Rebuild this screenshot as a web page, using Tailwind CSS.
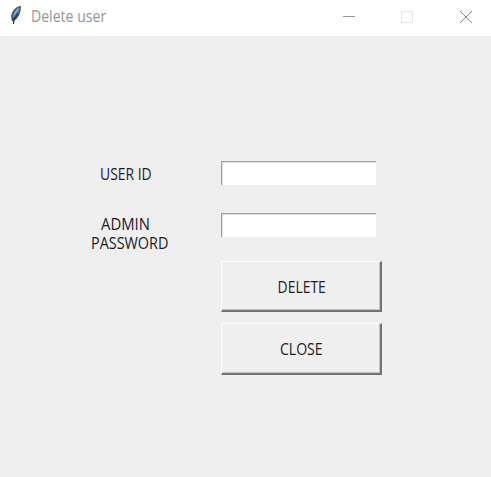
<!DOCTYPE html>
<html lang="en">
<head>
<meta charset="utf-8">
<title>Delete user</title>
<script src="https://cdn.jsdelivr.net/npm/@tailwindcss/browser@4"></script>
</head>
<body class="h-[477px] w-[491px] overflow-hidden bg-[#efefef] font-['Open_Sans','Noto_Sans',sans-serif] text-[#1c1c24]">
<header class="flex h-9 items-start bg-white">
  <svg class="ml-[9px] mt-[5px] h-5 w-[14px]" viewBox="0 0 14 20">
    <path d="M11.800.8C7 1.500 3 6 2.200 11L2.800 16.200L4.800 16C9.500 13 12.300 7 11.800.8Z" fill="#454b54"/>
    <path d="M10.500 2.200C7 3.500 4 7.500 3.500 12.500L6 12.800C9.500 10 10.800 6 10.500 2.200Z" fill="#4f8fd2"/>
    <path d="M9.300 3.500L5 9.500" stroke="#9dc0e4" stroke-width="1"/>
    <path d="M9 8L5 14L4.500 19" fill="none" stroke="#292d33" stroke-width="1.200"/>
  </svg>
  <h1 class="ml-2 mt-[5px] w-[300px] origin-left scale-x-[.88] text-[16px] leading-[22px] text-[#969696]">Delete user</h1>
  <svg class="ml-3 mt-[11px] h-3 w-3 shrink-0" viewBox="0 0 12 12" shape-rendering="crispEdges"><path d="M0 5.500H12" stroke="#999"/></svg>
  <svg class="ml-[46px] mt-[11px] h-3 w-3 shrink-0" viewBox="0 0 12 12" shape-rendering="crispEdges"><path d="M.5.5h11v11H.5z" fill="none" stroke="#e8e8e8"/></svg>
  <svg class="ml-[47px] mt-[11px] h-3 w-3 shrink-0" viewBox="0 0 12 12"><path d="M0 0L12 12M12 0L0 12" stroke="#888"/></svg>
</header>
<main class="pt-[125px]">
  <div class="flex h-[52px] items-start">
    <label for="uid" class="ml-[100px] mt-[4px] w-[121px] origin-left scale-x-[.87] text-[16px] leading-[18px]">USER ID</label>
    <input id="uid" class="h-6 w-[155px] border-t border-l border-[#a0a0a0] bg-white shadow-[inset_1px_1px_0_#dedede] outline-none">
  </div>
  <div class="flex h-12 items-start">
    <label for="pwd" class="ml-[91px] mt-[2px] w-[130px] text-[16px] leading-[19px]">
      <span class="ml-[10px] block origin-left scale-x-[.93]">ADMIN</span>
      <span class="block origin-left scale-x-[.9]">PASSWORD</span>
    </label>
    <input id="pwd" type="password" class="h-6 w-[155px] border-t border-l border-[#a0a0a0] bg-white shadow-[inset_1px_1px_0_#dedede] outline-none">
  </div>
  <div class="ml-[221px] flex flex-col gap-[11px]">
    <button class="flex h-[51px] w-[161px] items-center justify-center border-t border-l border-r-2 border-b-2 border-t-white border-l-white border-r-[#737373] border-b-[#737373] pt-px pl-px text-[16px] shadow-[inset_-1px_-1px_0_#c4c4c4]"><span class="scale-x-[.87]">DELETE</span></button>
    <button class="flex h-[52px] w-[161px] items-center justify-center border-t border-l border-r-2 border-b-2 border-t-white border-l-white border-r-[#737373] border-b-[#737373] pl-px text-[16px] shadow-[inset_-1px_-1px_0_#c4c4c4]"><span class="scale-x-[.88]">CLOSE</span></button>
  </div>
</main>
</body>
</html>
